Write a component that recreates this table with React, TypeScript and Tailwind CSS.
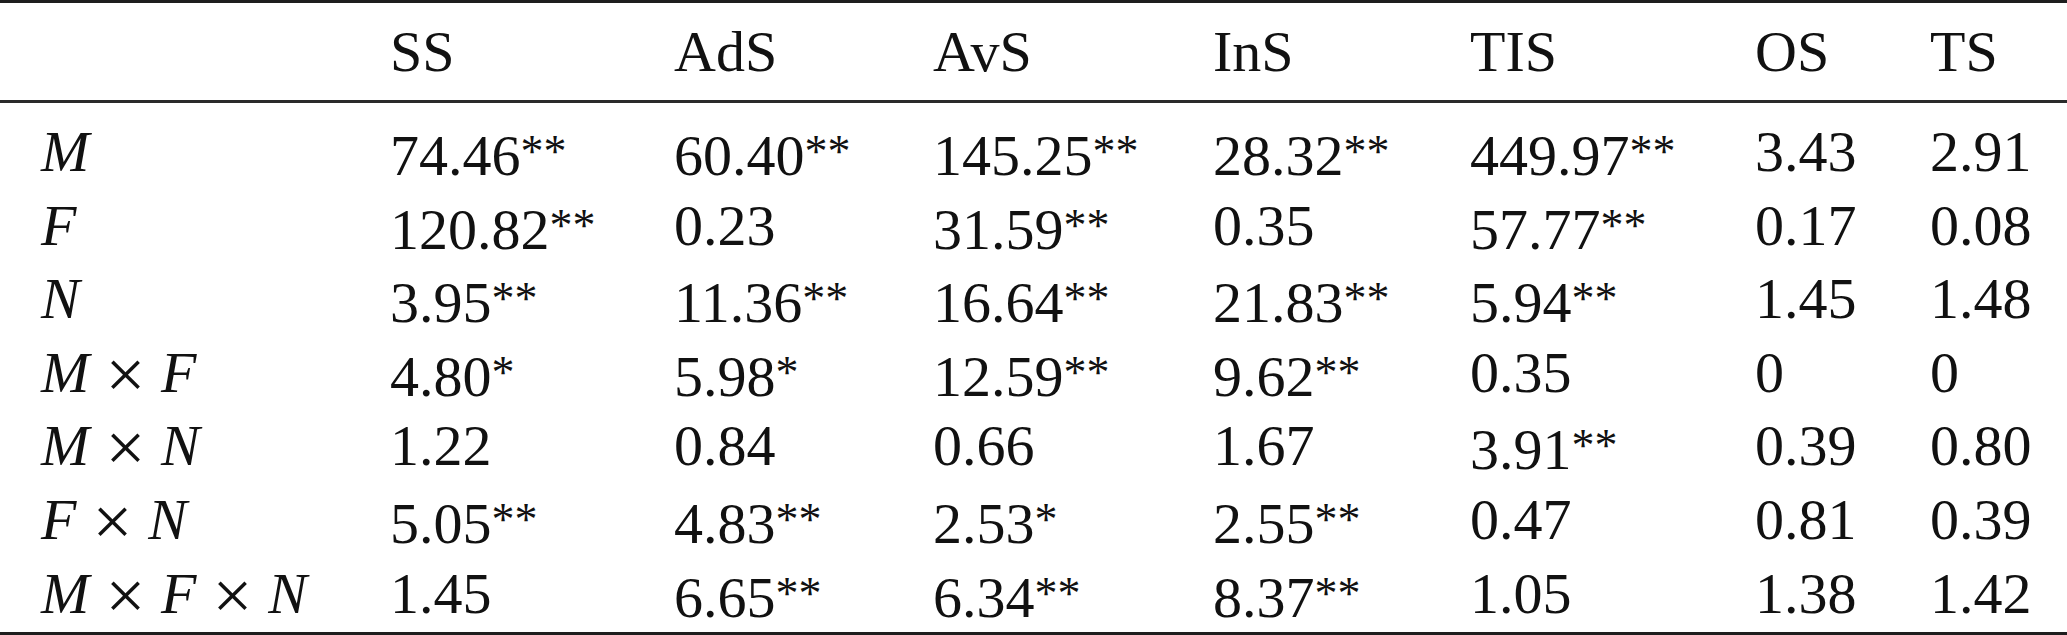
import React from "react"

type Cell = { v: string; s?: string }

const headers = ["SS", "AdS", "AvS", "InS", "TIS", "OS", "TS"]

const rows: { label: string[]; cells: Cell[] }[] = [
    { label: ["M"], cells: [{ v: "74.46", s: "**" }, { v: "60.40", s: "**" }, { v: "145.25", s: "**" }, { v: "28.32", s: "**" }, { v: "449.97", s: "**" }, { v: "3.43" }, { v: "2.91" }] },
    { label: ["F"], cells: [{ v: "120.82", s: "**" }, { v: "0.23" }, { v: "31.59", s: "**" }, { v: "0.35" }, { v: "57.77", s: "**" }, { v: "0.17" }, { v: "0.08" }] },
    { label: ["N"], cells: [{ v: "3.95", s: "**" }, { v: "11.36", s: "**" }, { v: "16.64", s: "**" }, { v: "21.83", s: "**" }, { v: "5.94", s: "**" }, { v: "1.45" }, { v: "1.48" }] },
    { label: ["M", "F"], cells: [{ v: "4.80", s: "*" }, { v: "5.98", s: "*" }, { v: "12.59", s: "**" }, { v: "9.62", s: "**" }, { v: "0.35" }, { v: "0" }, { v: "0" }] },
    { label: ["M", "N"], cells: [{ v: "1.22" }, { v: "0.84" }, { v: "0.66" }, { v: "1.67" }, { v: "3.91", s: "**" }, { v: "0.39" }, { v: "0.80" }] },
    { label: ["F", "N"], cells: [{ v: "5.05", s: "**" }, { v: "4.83", s: "**" }, { v: "2.53", s: "*" }, { v: "2.55", s: "**" }, { v: "0.47" }, { v: "0.81" }, { v: "0.39" }] },
    { label: ["M", "F", "N"], cells: [{ v: "1.45" }, { v: "6.65", s: "**" }, { v: "6.34", s: "**" }, { v: "8.37", s: "**" }, { v: "1.05" }, { v: "1.38" }, { v: "1.42" }] },
]

const cols = "grid grid-cols-[349px_284px_259px_280px_257px_285px_175px_1fr] pl-[41px]"

const Label = ({ parts }: { parts: string[] }) => (
    <span className="whitespace-nowrap">
        {parts.map((p, i) => (
            <React.Fragment key={i}>
                {i > 0 && (
                    <span className="px-[5px]">
                        {" "}
                        <span className="inline-block scale-[1.22] translate-y-[2px]">×</span>{" "}
                    </span>
                )}
                <span className="italic">{p}</span>
            </React.Fragment>
        ))}
    </span>
)

export default function App() {
    return (
        <div className="w-[2067px] h-[635px] bg-white text-[#111] font-['Liberation_Serif',serif] text-[58px] leading-[69.6px] flex flex-col">
            <div className="h-[3px] bg-[#1e1e1e]" />
            <div className={`${cols} h-[105px] pt-[14px]`}>
                <div />
                {headers.map((h) => (
                    <div key={h}>{h}</div>
                ))}
            </div>
            <div className="h-[3px] bg-[#2a2a2a]" />
            <div className="flex flex-col pt-[14px]">
                {rows.map((r, i) => (
                    <div key={i} className={cols}>
                        <Label parts={r.label} />
                        {r.cells.map((c, j) => (
                            <div key={j} className="whitespace-nowrap">
                                {c.v}
                                {c.s && <span className="text-[46px] align-[8px]">{c.s}</span>}
                            </div>
                        ))}
                    </div>
                ))}
            </div>
            <div className="flex-1" />
            <div className="h-[3px] bg-[#1e1e1e]" />
        </div>
    )
}
